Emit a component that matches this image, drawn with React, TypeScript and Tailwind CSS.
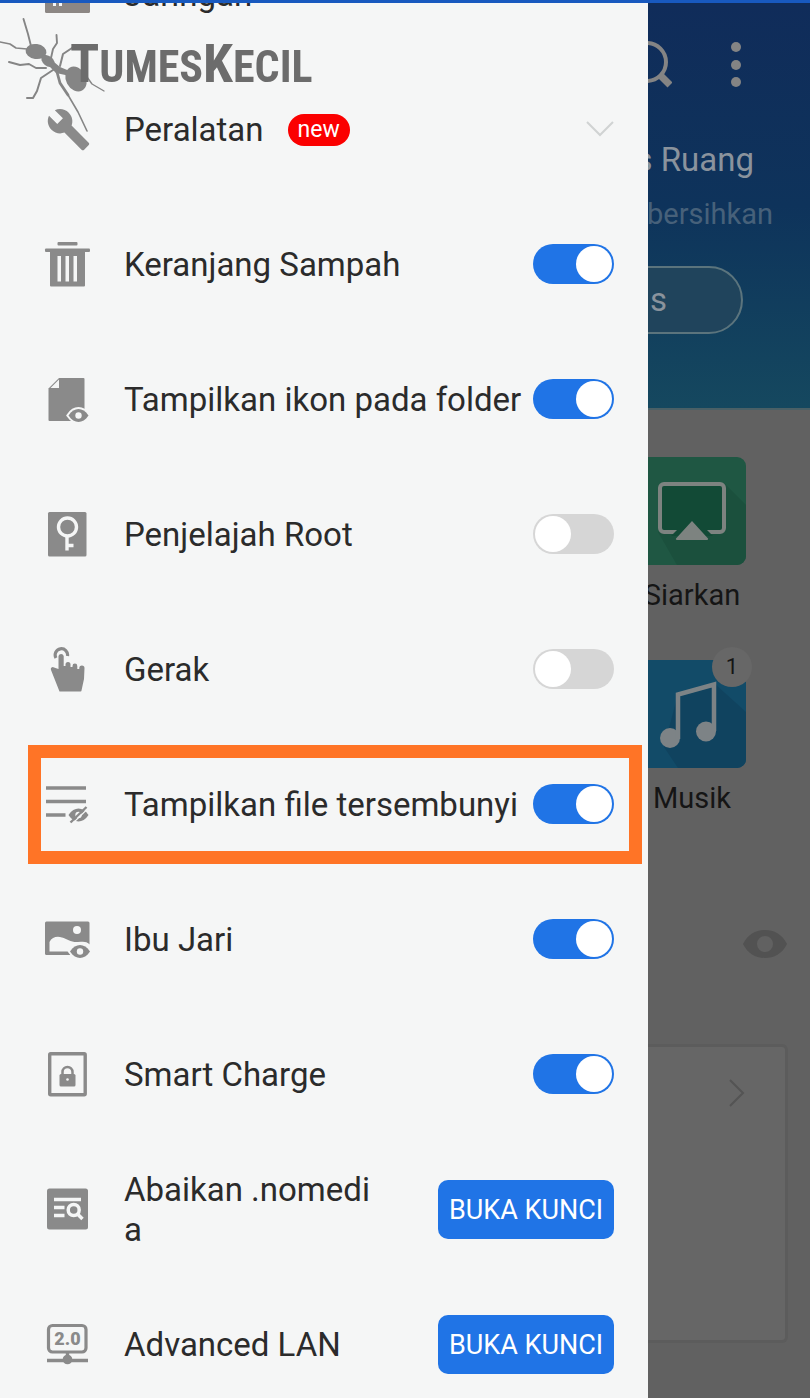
import { useState } from "react";
import type { ReactNode } from "react";

// Side drawer of the file manager, opened over the dimmed home screen.

const GREY = "#8a8a8a";
const PANEL = "#f5f6f6";

interface MenuItem {
    id: string;
    label: string;
    icon: ReactNode;
    kind: "toggle" | "unlock";
    highlighted?: boolean;
}

function Icon({ children }: { children: ReactNode }) {
    return (
        <svg viewBox="0 0 46 46" className="w-[46px] h-[46px] shrink-0" fill={GREY} aria-hidden="true">
            {children}
        </svg>
    );
}

function Eye({ x, y }: { x: number; y: number }) {
    return (
        <g transform={`translate(${x} ${y})`}>
            <path
                d="M-10 0C-7-4.5-3.500-6.500 0-6.500S7-4.500 10 0C7 4.500 3.500 6.500 0 6.500S-7 4.500-10 0Z"
                stroke={PANEL}
                strokeWidth="4"
                paintOrder="stroke"
            />
            <circle r="3.200" fill={PANEL} />
        </g>
    );
}

const wrenchIcon = (
    <Icon>
        <path
            transform="translate(2 0) scale(1.880)"
            d="M22.7 19l-9.1-9.1c.9-2.3.4-5-1.500-6.900-2-2-5-2.400-7.400-1.300L9 6 6 9 1.600 4.700C.4 7.100.9 10.100 2.900 12.100c1.900 1.900 4.600 2.400 6.900 1.500l9.100 9.100c.4.4 1 .4 1.400 0l2.300-2.300c.5-.4.5-1.100.1-1.400z"
        />
    </Icon>
);

const items: MenuItem[] = [
    {
        id: "trash",
        label: "Keranjang Sampah",
        kind: "toggle",
        icon: (
            <Icon>
                <rect x="13.5" y="0" width="20" height="3.500" rx="1" />
                <rect x="1" y="6.5" width="45" height="3.500" rx="1" />
                <path
                    fillRule="evenodd"
                    d="M6 9h35v34.500a1 1 0 0 1-1 1H7a1 1 0 0 1-1-1ZM13.500 14v25.500H17V14ZM21.500 14v25.500H25V14ZM29.500 14v25.500H33V14Z"
                />
            </Icon>
        ),
    },
    {
        id: "folder-icon",
        label: "Tampilkan ikon pada folder",
        kind: "toggle",
        icon: (
            <Icon>
                <path d="M15 1h24.500a1 1 0 0 1 1 1v41a1 1 0 0 1-1 1H5.500a1 1 0 0 1-1-1V11.500Z" />
                <path d="M15 2.500V11H6.500Z" fill={PANEL} />
                <Eye x={34.5} y={38.5} />
            </Icon>
        ),
    },
    {
        id: "root",
        label: "Penjelajah Root",
        kind: "toggle",
        icon: (
            <Icon>
                <rect x="4" y="0" width="38.500" height="44.500" rx="1.500" />
                <g fill="none" stroke={PANEL} strokeWidth="3.400">
                    <circle cx="23.500" cy="15" r="9" />
                    <path d="M23 24v14.500M23 33.500h6.500" />
                </g>
            </Icon>
        ),
    },
    {
        id: "gesture",
        label: "Gerak",
        kind: "toggle",
        icon: (
            <Icon>
                <path d="M12 11A6.200 6.200 0 1 1 23.500 9" fill="none" stroke={GREY} strokeWidth="3.200" />
                <path d="M14.500 9a2.700 2.700 0 0 1 5.200 0V19H21.500V17.500a2.500 2.500 0 0 1 5 0V20H28.500V19a2.400 2.400 0 0 1 4.800 0V22h2V21a2.600 2.600 0 0 1 5.200 0L40 32 37.500 43.500a1 1 0 0 1-1 1H15.500L7 23a2 2 0 0 1 3-2.500L14.500 22Z" />
            </Icon>
        ),
    },
    {
        id: "hidden-files",
        label: "Tampilkan file tersembunyi",
        kind: "toggle",
        highlighted: true,
        icon: (
            <Icon>
                <path d="M2 6h40M2 19.500h40M2 33h19.500" stroke={GREY} strokeWidth="3.400" />
                <Eye x={34.5} y={33} />
                <path d="M28.500 41.500 44 26.500" stroke={PANEL} strokeWidth="1.200" />
                <path d="M26.500 40.500 42.500 25" stroke={GREY} strokeWidth="2.400" />
            </Icon>
        ),
    },
    {
        id: "thumbnail",
        label: "Ibu Jari",
        kind: "toggle",
        icon: (
            <Icon>
                <rect x="1" y="4.500" width="44.500" height="33.500" rx="1.500" />
                <circle cx="33" cy="13" r="4" fill={PANEL} />
                <path
                    d="M5.500 34.500V25C8 20 13 19 18 20.500S27 25.500 34 25 42 24.500 46 27.500V40H26V34.500Z"
                    fill={PANEL}
                />
                <Eye x={36} y={34.5} />
            </Icon>
        ),
    },
    {
        id: "smart-charge",
        label: "Smart Charge",
        kind: "toggle",
        icon: (
            <Icon>
                <rect x="5.700" y="1.700" width="35.500" height="41" rx="1" fill="none" stroke={GREY} strokeWidth="3.400" />
                <rect x="15.500" y="22" width="16" height="12.500" rx="1.500" />
                <path d="M18.500 23v-3a5 5 0 0 1 10 0v3" fill="none" stroke={GREY} strokeWidth="2.500" />
                <circle cx="23.500" cy="27.500" r="1.300" fill={PANEL} />
            </Icon>
        ),
    },
    {
        id: "nomedia",
        label: "Abaikan .nomedia",
        kind: "unlock",
        icon: (
            <Icon>
                <rect x="3" y="1.500" width="41" height="41" rx="2.500" />
                <g fill="none" stroke={PANEL} strokeWidth="3.500">
                    <path d="M10 12.500h27M10 20.500h10.500M10 28.500h10.500M33.500 27l5 5" />
                    <circle cx="29.700" cy="23" r="5.500" />
                </g>
            </Icon>
        ),
    },
    {
        id: "lan",
        label: "Advanced LAN",
        kind: "unlock",
        icon: (
            <Icon>
                <rect x="4.500" y="3.500" width="37.500" height="26.500" rx="4" fill="none" stroke={GREY} strokeWidth="3.200" />
                <path d="M3 38.500h41M23.500 31v6" stroke={GREY} strokeWidth="3.400" />
                <circle cx="23.500" cy="37.500" r="4.800" />
                <text
                    x="23.500"
                    y="23"
                    textAnchor="middle"
                    fontFamily="Roboto, sans-serif"
                    fontWeight="900"
                    fontSize="18"
                >
                    2.0
                </text>
            </Icon>
        ),
    },
];

function Watermark() {
    return (
        <div className="absolute left-0 top-0 z-20 pointer-events-none">
            <svg viewBox="0 0 110 140" className="w-[110px] h-[140px]" fill="#858585" aria-hidden="true">
                <ellipse cx="36" cy="48.500" rx="10.500" ry="7.500" transform="rotate(8 36 48.500)" />
                <ellipse cx="48" cy="58" rx="7.500" ry="5" transform="rotate(38 48 58)" />
                <path d="M48 54l12 10 12 5-2 4-14-3-8-8Z" />
                <ellipse cx="76" cy="76" rx="10" ry="13" transform="rotate(-28 76 76)" />
                <g fill="none" stroke="#858585" strokeLinejoin="round" strokeLinecap="round">
                    <path d="M31 43 28 31 23.500 16" strokeWidth="1.900" />
                    <path d="M27 46 16 45 10 41 0 39" strokeWidth="1.700" />
                    <path d="M51 55 53 46 57 40 56.500 32" strokeWidth="1.900" />
                    <path d="M60 63 63 51 72 45 81 42" strokeWidth="2" />
                    <path d="M46 65 36 65 29 61 20 62 9 59" strokeWidth="2" />
                    <path d="M53 67 41 75 37 88 33 95 27 95" strokeWidth="2" />
                    <path d="M57 69 60 80 68 92" strokeWidth="2.800" />
                    <path d="M68 92 78 109 87 128" strokeWidth="1.600" />
                    <path d="M82 67 92 81 104 88" strokeWidth="1.400" />
                </g>
            </svg>
            <p className="absolute left-[70px] top-[31px] whitespace-nowrap font-['Liberation_Sans_Narrow','Roboto_Condensed','Liberation_Sans',sans-serif] font-bold text-[44px] leading-[60px] text-[#6c6c6c]">
                <span className="text-[54px]">T</span>UMES<span className="text-[54px]">K</span>ECIL
            </p>
        </div>
    );
}

function MenuRow({ item, on, onToggle }: { item: MenuItem; on: boolean; onToggle: () => void }) {
    return (
        <li className="relative flex items-center h-[135px] shrink-0 pl-11 pr-[34px]">
            {item.icon}
            <label
                htmlFor={item.id}
                className={`ml-[34px] flex-1 min-w-0 ${
                    item.kind === "unlock" ? "mr-14 break-all" : "whitespace-nowrap"
                }`}
            >
                {item.label}
            </label>
            {item.kind === "toggle" ? (
                <input
                    id={item.id}
                    type="checkbox"
                    role="switch"
                    checked={on}
                    onChange={onToggle}
                    className="appearance-none shrink-0 w-[81px] h-10 mb-[2px] p-[2px] rounded-full bg-[#d6d6d6] checked:bg-[#2074e6] before:block before:w-9 before:h-9 before:rounded-full before:bg-white checked:before:ml-auto"
                />
            ) : (
                <button
                    id={item.id}
                    type="button"
                    className="shrink-0 w-44 h-[59px] rounded-[10px] bg-[#2074e6] text-white text-[27px] whitespace-nowrap"
                >
                    BUKA KUNCI
                </button>
            )}
            {item.highlighted && (
                <div className="absolute left-7 right-[6px] top-2 bottom-2 border-[13px] border-[#ff7426] pointer-events-none" />
            )}
        </li>
    );
}

function HomeBackdrop() {
    return (
        <main className="flex-1 min-w-0 overflow-hidden flex flex-col items-end bg-[#616161] text-[#151515]">
            <header className="w-full h-[407px] shrink-0 flex flex-col items-end bg-linear-to-b from-[#102c5a] via-[#0e335b] via-50% to-[#15485f] border-b-2 border-[#4a6066] text-[#8a939d]">
                <div className="flex items-center gap-[54px] mt-9 mr-[64px]">
                    <button type="button" aria-label="Cari">
                        <svg viewBox="0 0 48 52" className="w-12 h-[52px]" fill="none" stroke="#848484" aria-hidden="true">
                            <circle cx="23" cy="23" r="19" strokeWidth="4" />
                            <path d="M36 36 46 46" strokeWidth="7" />
                        </svg>
                    </button>
                    <button type="button" aria-label="Menu">
                        <svg viewBox="0 0 20 52" className="w-5 h-[52px]" fill="#848484" aria-hidden="true">
                            <circle cx="10" cy="8" r="5" />
                            <circle cx="10" cy="26" r="5" />
                            <circle cx="10" cy="43" r="5" />
                        </svg>
                    </button>
                </div>
                <p className="mt-[49px] mr-14 text-[33px] leading-10 whitespace-nowrap">s Ruang</p>
                <p className="mt-4 mr-[37px] text-[29px] leading-9 whitespace-nowrap text-[#47617a]">bersihkan</p>
                <button
                    type="button"
                    className="mt-[34px] mr-[67px] w-[140px] h-[68px] shrink-0 rounded-full border-2 border-[#5b747d] bg-[#20445c] text-[33px] leading-9 text-right pr-[74px]"
                >
                    s
                </button>
            </header>

            <div className="flex flex-col items-center shrink-0 mr-16 text-[29px] leading-9">
                <svg viewBox="0 0 108 108" className="w-[108px] h-[108px] mt-[47px]" aria-hidden="true">
                    <rect width="108" height="108" rx="9" fill="#1f5743" />
                    <path d="M20 75 39 108H99a9 9 0 0 0 9-9V48L86 26Z" fill="#1b503d" />
                    <rect x="22" y="27" width="64" height="48" rx="4" fill="#124a36" stroke="#7d8380" strokeWidth="4" />
                    <path d="M33 79 54 58 75 79Z" fill="#124a36" />
                    <path d="M54 64 70 81.500a1 1 0 0 1-1 1.500H39a1 1 0 0 1-1-1.500Z" fill="#7d8380" />
                </svg>
                <p className="mt-3">Siarkan</p>
                <div className="relative mt-[47px]">
                    <svg viewBox="0 0 108 108" className="w-[108px] h-[108px]" aria-hidden="true">
                        <rect width="108" height="108" rx="9" fill="#124b68" />
                        <path d="M26 87 40 108H99a9 9 0 0 0 9-9V52L77 24 40 34Z" fill="#10435f" />
                        <circle cx="32" cy="78" r="10" fill="#7d8386" />
                        <circle cx="68" cy="71.500" r="10" fill="#7d8386" />
                        <path d="M40 79V34.500L76 24.500V71" fill="none" stroke="#7d8386" strokeWidth="4.500" />
                    </svg>
                    <span className="absolute -top-[13px] -right-[6px] w-10 h-10 rounded-full bg-[#676767] text-[22px] leading-10 text-center">
                        1
                    </span>
                </div>
                <p className="mt-3">Musik</p>
            </div>

            <svg viewBox="0 0 46 30" className="w-[46px] h-[30px] shrink-0 mt-[113px] mr-[22px]" aria-hidden="true">
                <path
                    fillRule="evenodd"
                    fill="#525252"
                    d="M1 15C6 5 14 1 23 1S40 5 45 15C40 25 32 29 23 29S6 25 1 15ZM23 7a8 8 0 1 0 0 16 8 8 0 0 0 0-16Z"
                />
            </svg>
            <section className="w-full h-[299px] shrink-0 mt-[85px] pr-[22px]">
                <div className="h-full flex justify-end border-[3px] border-l-0 border-[#5c5c5c] rounded-r-md bg-[#666666]">
                    <svg viewBox="0 0 16 28" className="w-4 h-7 mt-8 mr-[40px]" fill="none" stroke="#545454" strokeWidth="2" aria-hidden="true">
                        <path d="M1 1 14 14 1 27" />
                    </svg>
                </div>
            </section>
        </main>
    );
}

export default function App() {
    const [enabled, setEnabled] = useState<Record<string, boolean>>({
        trash: true,
        "folder-icon": true,
        root: false,
        gesture: false,
        "hidden-files": true,
        thumbnail: true,
        "smart-charge": true,
    });

    const toggle = (id: string) => setEnabled((e) => ({ ...e, [id]: !e[id] }));

    return (
        <div className="relative h-screen overflow-hidden flex flex-col border-t-[3px] border-[#1859bf] font-['Roboto',sans-serif]">
            <div className="flex flex-1 min-h-0">
                <nav className="w-4/5 shrink-0 overflow-y-auto [scrollbar-width:none] bg-[#f5f6f6] text-[#2b2b2b] text-[33px] leading-10">
                    <ul className="flex flex-col">
                        {/* scrolled almost out of view */}
                        <li className="flex items-end h-[59px] overflow-hidden">
                            <div className="flex items-center h-[135px] shrink-0 pl-11">
                                <Icon>
                                    <rect x="1" y="2" width="45" height="39" rx="1.500" fill="#8c8784" />
                                    <path d="M9 28h3v6H9ZM15 28h3v6h-3Z" fill={PANEL} />
                                </Icon>
                                <span className="ml-[34px]">Jaringan</span>
                            </div>
                        </li>
                        <li className="flex items-center h-[135px] shrink-0 pl-11 pr-[34px]">
                            {wrenchIcon}
                            <span className="ml-[34px]">Peralatan</span>
                            <span className="ml-6 h-8 px-[10px] rounded-full bg-[#fb0000] text-white text-[23px] leading-8">
                                new
                            </span>
                            <button type="button" aria-label="Buka Peralatan" className="ml-auto mb-[2px]">
                                <svg viewBox="0 0 28 16" className="w-7 h-4" fill="none" stroke="#d0d3d3" strokeWidth="2" aria-hidden="true">
                                    <path d="M1 1 14 14 27 1" />
                                </svg>
                            </button>
                        </li>
                        {items.map((item) => (
                            <MenuRow
                                key={item.id}
                                item={item}
                                on={!!enabled[item.id]}
                                onToggle={() => toggle(item.id)}
                            />
                        ))}
                    </ul>
                </nav>
                <HomeBackdrop />
            </div>
            <Watermark />
        </div>
    );
}
